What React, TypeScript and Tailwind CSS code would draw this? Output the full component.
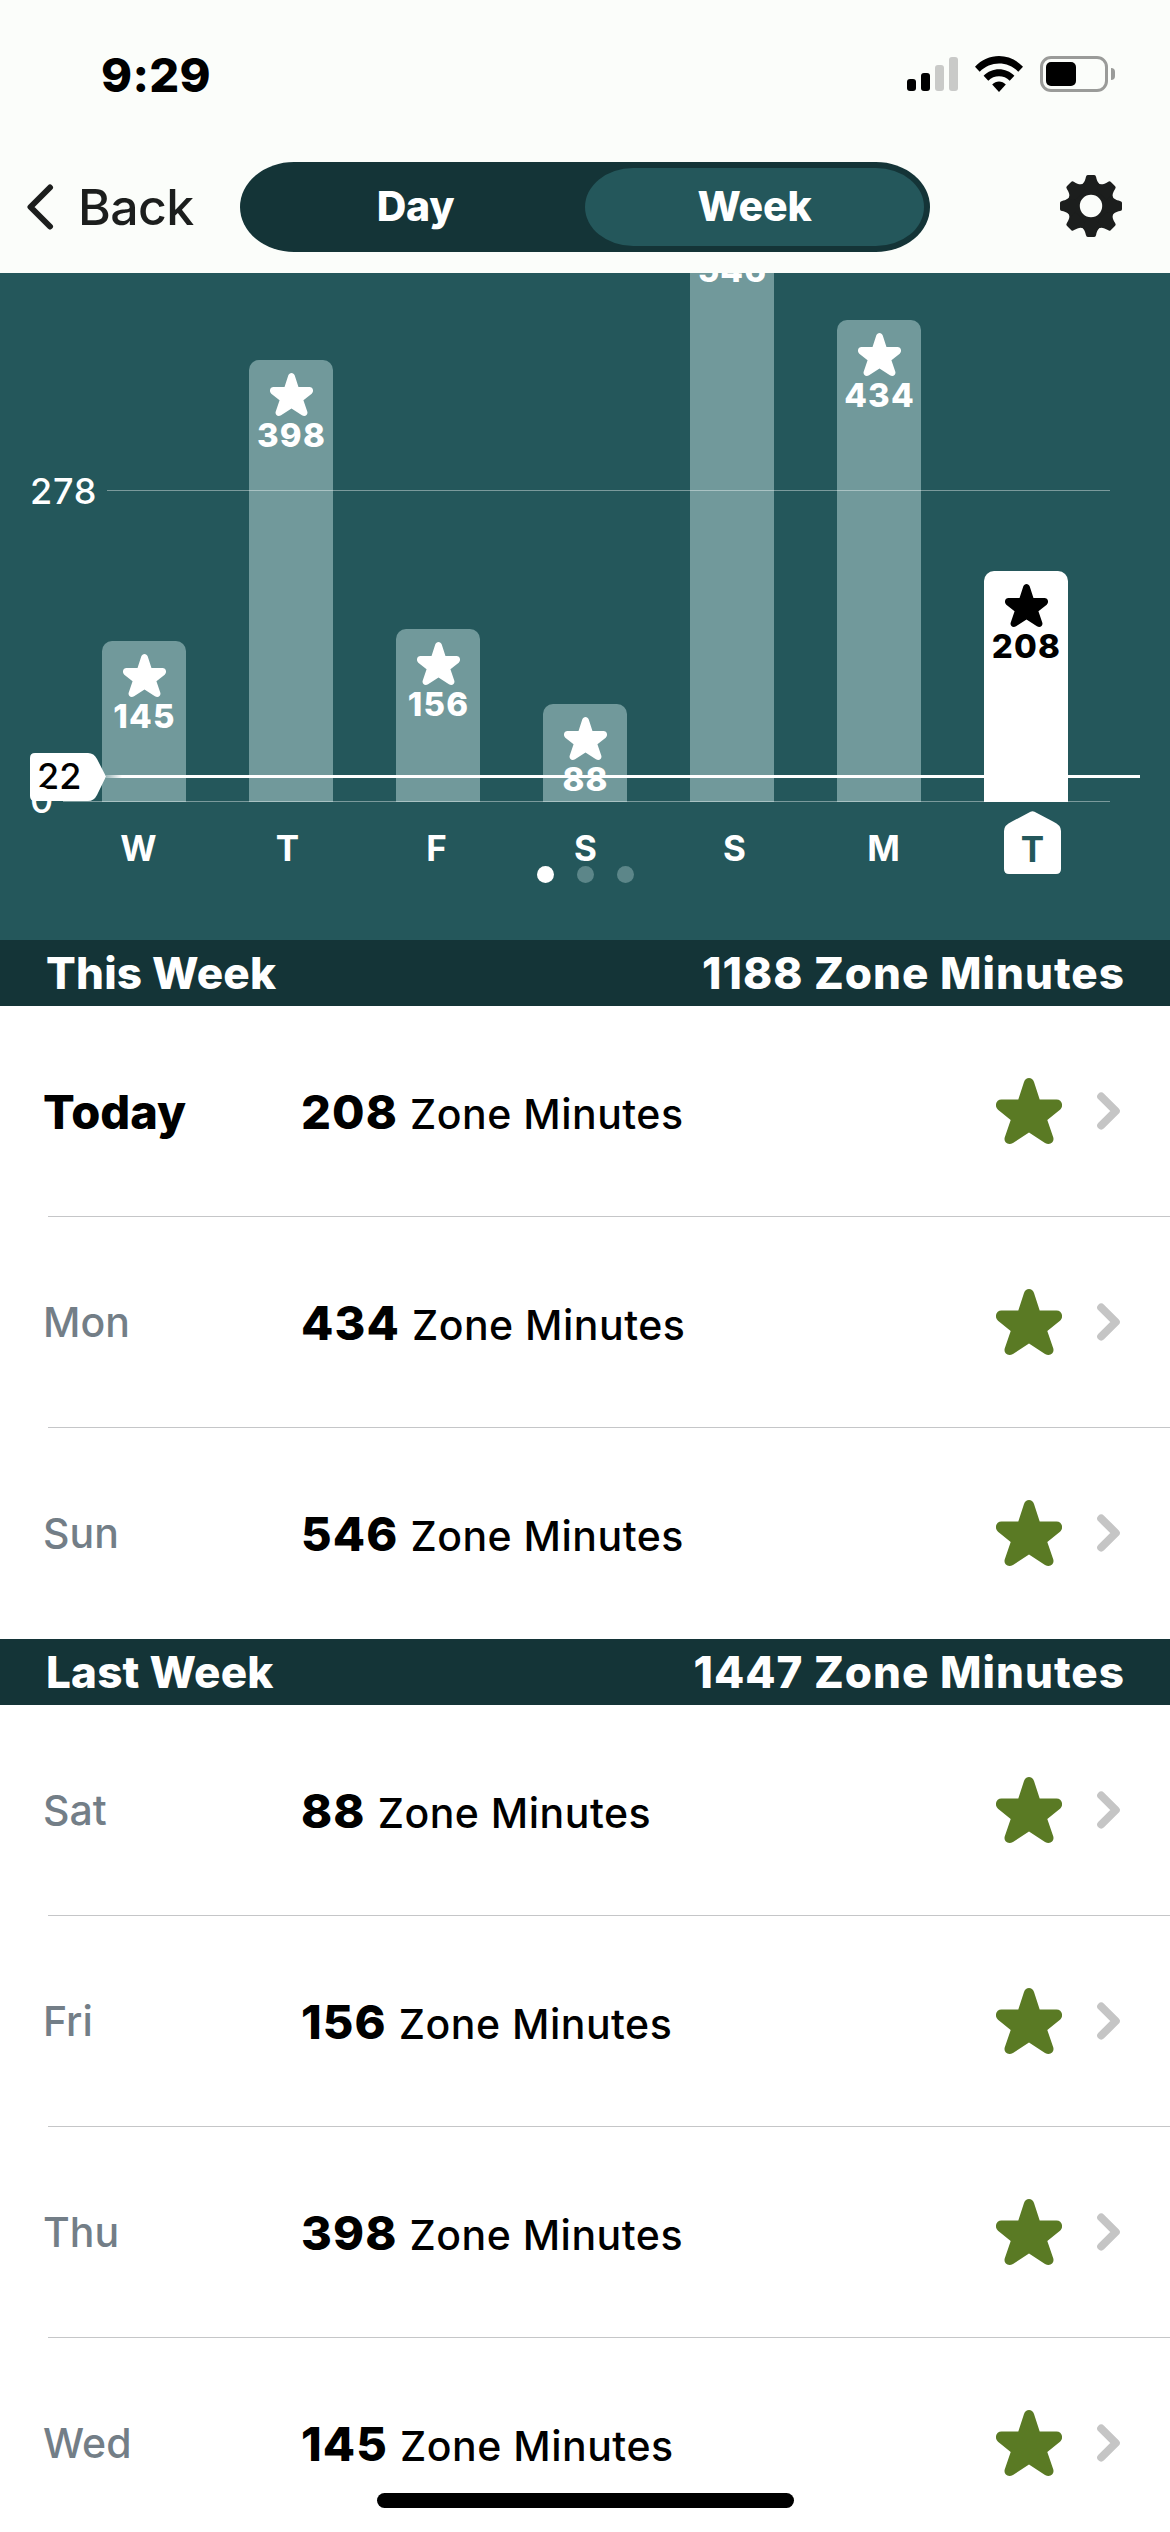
type Day = {
  label: string;
  letter: string;
  minutes: number;
  today?: boolean;
};

const CHART_DAYS: Day[] = [
  { label: "Wed", letter: "W", minutes: 145 },
  { label: "Thu", letter: "T", minutes: 398 },
  { label: "Fri", letter: "F", minutes: 156 },
  { label: "Sat", letter: "S", minutes: 88 },
  { label: "Sun", letter: "S", minutes: 546 },
  { label: "Mon", letter: "M", minutes: 434 },
  { label: "Today", letter: "T", minutes: 208, today: true },
];

const THIS_WEEK = CHART_DAYS.slice(4).reverse();
const LAST_WEEK = CHART_DAYS.slice(0, 4).reverse();

// chart pixels per zone minute
const SCALE = 1.111;

function Star({ className }: { className?: string }) {
  return (
    <svg viewBox="0 0 66 66" className={className} fill="currentColor">
      <path d="M22.3 21.5 28 4C29.6-1.2 36.4-1.2 38 4L43.7 21.5H60.5C66 21.5 68 28 64 31.7L51.3 42 57.3 59.5C58.5 64.5 54 67.6 49 65L33 54.6 17 65C12 67.6 7.5 64.5 8.7 59.5L14.7 42 2 31.7C-2 28 0 21.5 5.5 21.5Z" />
    </svg>
  );
}

function Gear() {
  const teeth = [0, 45, 90, 135, 180, 225, 270, 315];
  return (
    <svg viewBox="-31 -31 62 62" className="h-[62px] w-[62px] text-[#1c1e1d]">
      <circle r="17.2" fill="none" stroke="currentColor" strokeWidth="12" />
      {teeth.map((angle) => (
        <path
          key={angle}
          d="M-11-20.5C-7-22.5-6-25-5.1-29Q-4.7-31-3.2-31H3.2Q4.7-31 5.1-29C6-25 7-22.5 11-20.5L5-15H-5Z"
          fill="currentColor"
          transform={`rotate(${angle})`}
        />
      ))}
    </svg>
  );
}

function StatusBar() {
  return (
    <div className="flex h-[148px] items-center justify-between pr-[55px] pl-[101px]">
      <span className="text-[47px] leading-none font-extrabold tracking-[0.3px] text-black">
        9:29
      </span>
      <div className="flex items-center">
        <div className="flex h-[34px] items-end gap-[5px]">
          <div className="h-3 w-[9px] rounded-[3px] bg-black" />
          <div className="h-[18px] w-[9px] rounded-[3px] bg-black" />
          <div className="h-[26px] w-[9px] rounded-[3px] bg-[#c9cac8]" />
          <div className="h-[34px] w-[9px] rounded-[3px] bg-[#c9cac8]" />
        </div>
        <svg viewBox="0 0 48 36" className="ml-[17px] h-9 w-12" fill="#000">
          <path d="M0 10.8C13-3.6 35-3.6 48 10.8L43.3 15.8C32.5 4.8 15.5 4.8 4.7 15.8Z" />
          <path d="M8.6 19.8C17 11 31 11 39.4 19.8L34.7 24.7C29 18.8 19 18.8 13.3 24.7Z" />
          <path d="M17.2 28.6C21 24.6 27 24.6 30.8 28.6L24 35.9Z" />
        </svg>
        <div className="ml-[17px] h-9 w-[68px] rounded-[11px] border-[3px] border-[#9a9b99] p-[3px]">
          <div className="h-6 w-[30px] rounded-[5px] bg-black" />
        </div>
        <div className="ml-[3px] h-3 w-1 rounded-r-full bg-[#9a9b99]" />
      </div>
    </div>
  );
}

function NavBar() {
  return (
    <div className="flex h-[125px] items-start pt-3.5 pr-12 pl-[26px]">
      <div className="flex h-[90px] w-[214px] items-center">
        <svg viewBox="0 0 28 46" className="h-[46px] w-7" fill="none">
          <path
            d="M24 3.5 4.5 23 24 42.5"
            stroke="#1c1e1d"
            strokeWidth="6"
            strokeLinecap="round"
            strokeLinejoin="round"
          />
        </svg>
        <span className="ml-6 text-[50px] leading-none font-medium tracking-[-0.6px] text-[#1c1e1d]">
          Back
        </span>
      </div>
      <div className="grid h-[90px] w-[690px] grid-cols-[345px_339px] rounded-[54px/45px] bg-[#143437] py-1.5 text-[41px] font-extrabold tracking-[-0.2px] text-white">
        <div className="flex items-center justify-center pl-1.5">Day</div>
        <div className="flex items-center justify-center rounded-[48px/39px] bg-[#24575b]">
          Week
        </div>
      </div>
      <div className="ml-auto flex h-[88px] items-center">
        <Gear />
      </div>
    </div>
  );
}

function Bar({ day }: { day: Day }) {
  return (
    <div
      className={
        day.today
          ? "flex w-[84px] shrink-0 flex-col items-center rounded-t-[10px] bg-white pt-[13px] text-black"
          : "flex w-[84px] shrink-0 flex-col items-center rounded-t-[10px] bg-[#71999b] pt-[13px] text-white"
      }
      style={{ height: Math.round(day.minutes * SCALE) }}
    >
      <Star className="h-[43px] w-[43px] shrink-0" />
      <span className="mt-0.5 pl-px text-[33px] leading-[34px] font-extrabold tracking-[1.2px]">
        {day.minutes}
      </span>
    </div>
  );
}

function Chart() {
  return (
    <div className="relative h-[667px] overflow-hidden bg-[#24575b]">
      <div className="flex h-[529px] items-end gap-[63px] pl-[102px]">
        {CHART_DAYS.map((day) => (
          <Bar key={day.label} day={day} />
        ))}
      </div>

      <div className="flex items-start pt-[9px] pl-[64px] text-[35px] leading-[51px] font-bold text-white">
        {CHART_DAYS.map((day) => (
          <div key={day.label} className="flex h-[63px] w-[149px] justify-center">
            {day.today ? (
              <div className="relative w-[57px] pt-[13px] text-center text-[#24575b]">
                <svg viewBox="0 0 57 63" className="absolute inset-0 h-[63px] w-[57px]">
                  <path
                    d="M26.5.8Q28.5-.4 30.5.8L49 10.5Q57 14 57 20V58Q57 63 52 63H5Q0 63 0 58V20Q0 14 8 10.5Z"
                    fill="#fff"
                  />
                </svg>
                <span className="relative">{day.letter}</span>
              </div>
            ) : (
              <span className="pt-3">{day.letter}</span>
            )}
          </div>
        ))}
      </div>

      <div className="relative -mt-2 flex justify-center gap-[23px]">
        <div className="h-[17px] w-[17px] rounded-full bg-white" />
        <div className="h-[17px] w-[17px] rounded-full bg-[#5c8689]" />
        <div className="h-[17px] w-[17px] rounded-full bg-[#5c8689]" />
      </div>

      {/* gridlines */}
      <div className="absolute top-[217px] right-[60px] left-[107px] h-px bg-white/40" />
      <div className="absolute top-[528px] right-[60px] left-[63px] h-px bg-white/40" />
      <span className="absolute top-[196px] left-[30px] text-[36px] leading-[44px] font-medium tracking-[0.8px] text-white">
        278
      </span>

      {/* daily goal */}
      <div className="absolute top-[502px] right-[30px] left-[106px] h-[3px] bg-linear-to-r from-white/30 to-white to-[16px]" />
      <div className="absolute top-[480px] left-[30px] h-12 w-[76px]">
        <svg viewBox="0 0 76 48" className="absolute inset-0 h-12 w-[76px]">
          <path
            d="M5 0H58Q64 0 67 6L76 23.5 67 42Q64 48 58 48H5Q0 48 0 43V5Q0 0 5 0Z"
            fill="#fff"
          />
        </svg>
        <span className="relative pl-[7px] text-[36px] leading-[46px] font-medium text-black">
          22
        </span>
      </div>
      <span className="absolute top-[505px] left-[30px] text-[36px] leading-[44px] font-medium text-white">
        0
      </span>
    </div>
  );
}

function SectionHeader({ title, total }: { title: string; total: number }) {
  return (
    <div className="flex h-[66px] items-center justify-between bg-[#143437] pr-[45px] pl-[46px] text-[44px] leading-none font-extrabold text-white">
      <span className="tracking-[0.2px]">{title}</span>
      <span className="tracking-[1px]">{total} Zone Minutes</span>
    </div>
  );
}

function DayRow({ day }: { day: Day }) {
  return (
    <div className="group">
      <div className="flex h-[210px] items-center pl-[43px]">
        <div className="w-[258px] pt-0.5">
          {day.today ? (
            <span className="text-[47px] font-extrabold text-black">{day.label}</span>
          ) : (
            <span className="text-[41px] font-medium text-[#737e87]">{day.label}</span>
          )}
        </div>
        <div className="flex items-baseline gap-3 pt-0.5 text-black">
          <span className="text-[47px] font-extrabold tracking-[1.1px]">{day.minutes}</span>
          <span className="text-[41px] font-medium tracking-[0.5px]">Zone Minutes</span>
        </div>
        <div className="ml-auto flex items-center pr-[49px]">
          <Star className="h-[66px] w-[66px] text-[#5a7a24]" />
          <svg viewBox="0 0 24 38" className="ml-[35px] h-[38px] w-6" fill="none">
            <path
              d="M4.2 4.5 18.8 19 4.2 33.5"
              stroke="#c5c5c5"
              strokeWidth="8"
              strokeLinecap="round"
              strokeLinejoin="round"
            />
          </svg>
        </div>
      </div>
      <div className="ml-12 h-px bg-[#c5c6c8] group-last:bg-transparent" />
    </div>
  );
}

function WeekSection({ title, total, days }: { title: string; total: number; days: Day[] }) {
  return (
    <section>
      <SectionHeader title={title} total={total} />
      {days.map((day) => (
        <DayRow key={day.label} day={day} />
      ))}
    </section>
  );
}

export default function App() {
  return (
    <div className="relative h-[2532px] w-[1170px] overflow-hidden bg-white font-['Inter',sans-serif]">
      <header className="bg-[#fbfdfa]">
        <StatusBar />
        <NavBar />
      </header>
      <Chart />
      <WeekSection title="This Week" total={1188} days={THIS_WEEK} />
      <WeekSection title="Last Week" total={1447} days={LAST_WEEK} />
      <div className="absolute bottom-6 left-[377px] h-[15px] w-[417px] rounded-full bg-black" />
    </div>
  );
}
